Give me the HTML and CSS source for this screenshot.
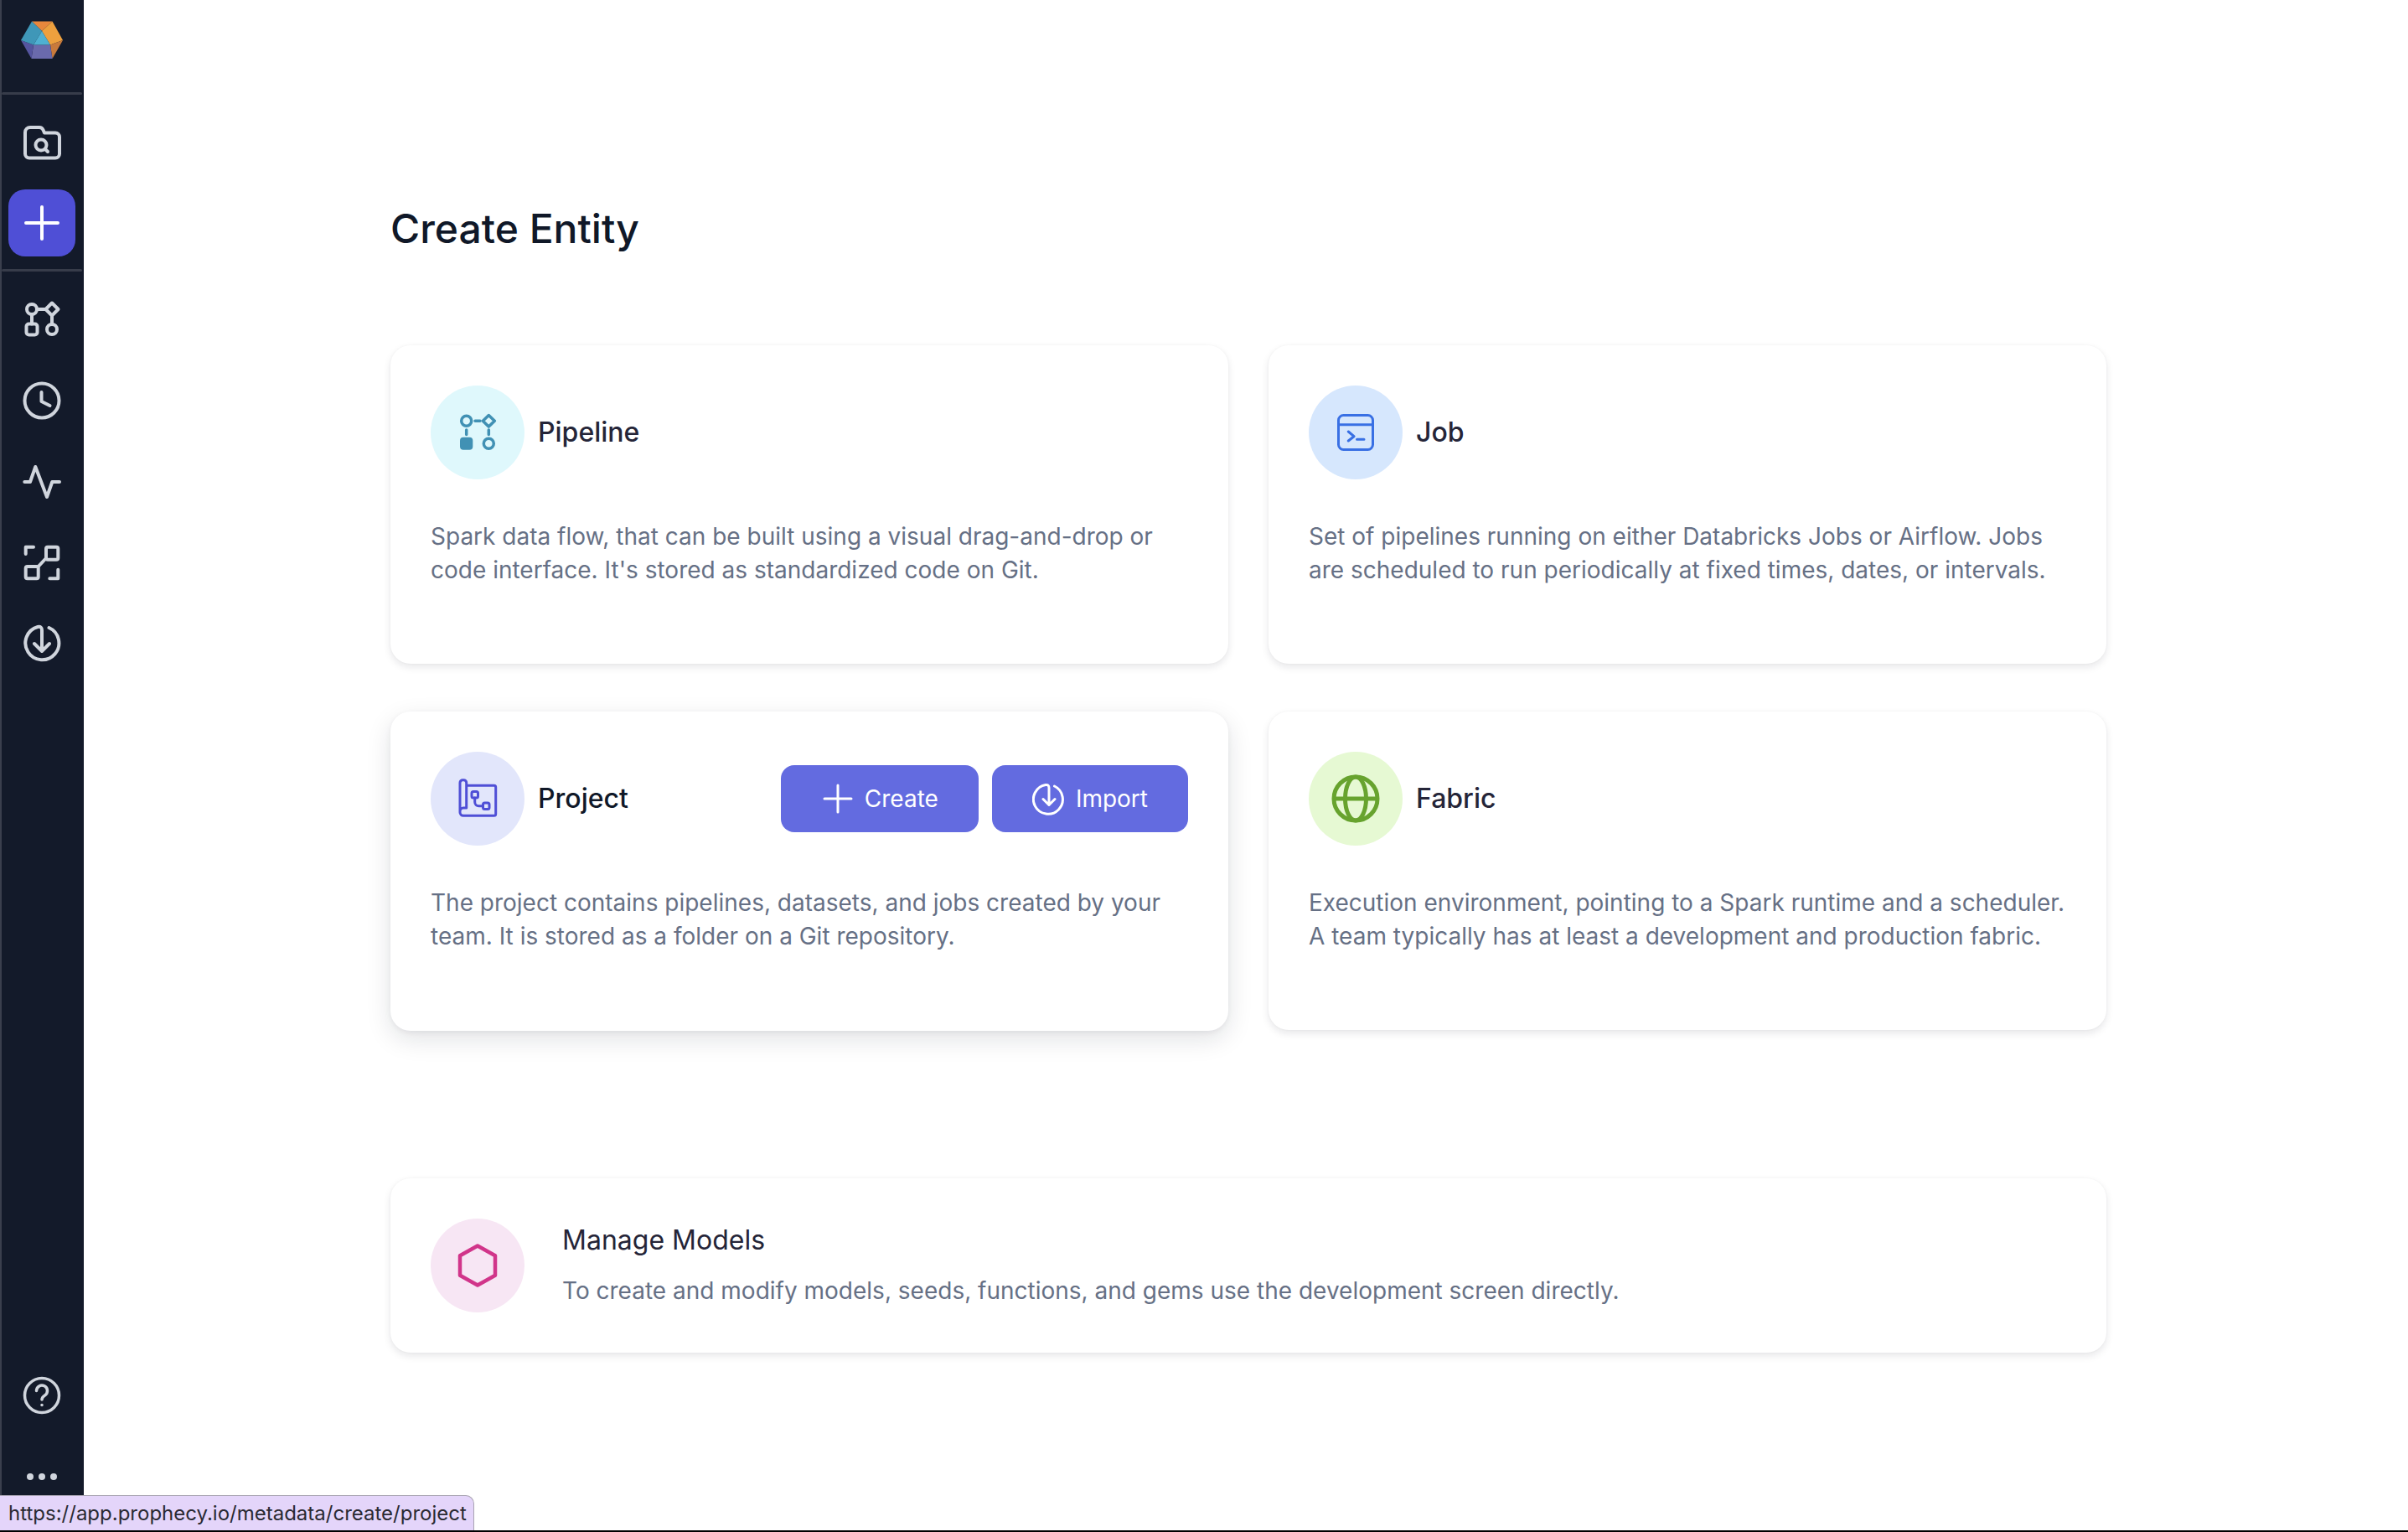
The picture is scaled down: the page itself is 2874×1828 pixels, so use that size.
FILE: index.html
```html
<!DOCTYPE html>
<html lang="en">
<head>
<meta charset="utf-8">
<title>Create Entity</title>
<link rel="stylesheet" href="styles.css">
</head>
<body>
<div class="app">
  <nav class="sidebar">
    <div class="logo">
      <svg viewBox="0 0 100 100" width="100" height="100">
        <polygon fill="#e8873c" points="38,25.5 62.5,25.5 50,37"/>
        <polygon fill="#eda03e" points="62.5,25.5 75,48 60,53.5 50,37"/>
        <polygon fill="#c87a3c" points="75,48 62.5,70 60,53.5"/>
        <polygon fill="#6a6aac" points="40,53.5 60,53.5 62.5,70 37.5,70"/>
        <polygon fill="#55559f" points="25,48 40,53.5 37.5,70"/>
        <polygon fill="#3f97b8" points="38,25.5 50,37 40,53.5 25,48"/>
        <polygon fill="#4fb0d2" points="50,37 60,53.5 40,53.5"/>
      </svg>
    </div>
    <div class="rule"></div>
    <a class="nav-item nav-item-first">
      <svg class="ico" viewBox="0 0 48 48"><path d="M4 12a6 6 0 0 1 6-6h11a5 5 0 0 1 4.500 3l1.500 3.500h13a5 5 0 0 1 5 5v20a5 5 0 0 1-5 5H9a5 5 0 0 1-5-5z"/><circle cx="23" cy="27" r="6.500"/><path d="M28 32l3 3"/></svg>
    </a>
    <a class="add-btn">
      <svg class="ico ico-white" viewBox="0 0 48 48"><path d="M24 5v38M5 24h38"/></svg>
    </a>
    <div class="rule rule-low"></div>
    <a class="nav-item">
      <svg class="ico" viewBox="0 0 48 48"><circle cx="12" cy="12" r="6"/><path d="M36 4.500l7.500 7.500-7.500 7.500-7.500-7.500z"/><rect x="5.500" y="29.500" width="13" height="13" rx="3"/><circle cx="36" cy="36" r="6"/><path d="M18 12h10.500M12 18v11.500M36 19.500V30"/></svg>
    </a>
    <a class="nav-item">
      <svg class="ico" viewBox="0 0 48 48"><circle cx="24" cy="24" r="20.500"/><path d="M23.500 14v11l10 5"/></svg>
    </a>
    <a class="nav-item">
      <svg class="ico" viewBox="0 0 48 48"><path d="M3.300 25H10l6.300-18L30 43l6.300-18H45"/></svg>
    </a>
    <a class="nav-item">
      <svg class="ico" viewBox="0 0 48 48"><path d="M4.700 14V5.700H14M33.300 43.300h10V32.700M19.700 29L29 19"/><rect x="29" y="5.700" width="14.300" height="15" rx="2"/><rect x="4.700" y="29" width="15" height="14.300" rx="2"/></svg>
    </a>
    <a class="nav-item">
      <svg class="ico" viewBox="0 0 48 48"><path d="M32.500 6A20 20 0 1 1 19 5q5-1 5 4v25M15 25l9 9 9-9"/></svg>
    </a>
    <div class="sidebar-foot">
      <a class="nav-item">
        <svg class="ico ico-thin" viewBox="0 0 48 48"><circle cx="24" cy="24" r="20.500"/><path d="M17.500 18.500a6.500 6.500 0 1 1 10 5.500c-2.500 1.500-3.500 2.500-3.500 5"/><path d="M24 35.500v.1"/></svg>
      </a>
      <div class="dots"><span class="dot"></span><span class="dot"></span><span class="dot"></span></div>
    </div>
  </nav>

  <main class="content">
    <h1 class="page-title">Create Entity</h1>
    <section class="entity-grid">
      <article class="card">
        <header class="card-head">
          <span class="badge badge-cyan">
            <svg class="badge-ico" viewBox="0 0 48 48" fill="none" stroke="#4191b4" stroke-width="3.500" stroke-linecap="round" stroke-linejoin="round"><circle cx="10.700" cy="10.300" r="6"/><path d="M37.300 3.500l7 6.800-7 6.800-7-6.800z"/><rect x="3" y="29.700" width="15.300" height="15" rx="4" fill="#4191b4" stroke="none"/><circle cx="37.300" cy="37.300" r="6"/><path d="M21 10.300h6M10.700 21v5.500M37.300 21v5.500"/></svg>
          </span>
          <h2 class="card-title">Pipeline</h2>
        </header>
        <p class="card-text">Spark data flow, that can be built using a visual drag-and-drop or code interface. It's stored as standardized code on Git.</p>
      </article>

      <article class="card">
        <header class="card-head">
          <span class="badge badge-blue">
            <svg class="badge-ico" viewBox="0 0 48 48" fill="none" stroke="#3970e4" stroke-width="3" stroke-linecap="round" stroke-linejoin="round"><rect x="3.500" y="3.500" width="41" height="41" rx="6"/><path d="M3.500 14.700h41M15.300 23l6.700 5.700-6.700 5.300M25.500 32.300h8.500"/></svg>
          </span>
          <h2 class="card-title">Job</h2>
        </header>
        <p class="card-text">Set of pipelines running on either Databricks Jobs or Airflow. Jobs are scheduled to run periodically at fixed times, dates, or intervals.</p>
      </article>

      <article class="card card-hover">
        <header class="card-head">
          <span class="badge badge-indigo">
            <svg class="badge-ico" viewBox="0 0 48 48" fill="none" stroke="#4f4fd6" stroke-width="3" stroke-linecap="round" stroke-linejoin="round"><path d="M10.700 8.300h33a2 2 0 0 1 2 2v32a2 2 0 0 1-2 2H7a4 4 0 0 1-4-4V5a3.300 3.300 0 0 1 3.300-3.300h1.100A3.300 3.300 0 0 1 10.700 5v30H7a4 4 0 0 0-4 4"/><rect x="17" y="15.500" width="7.500" height="7.500" rx="2"/><rect x="30.500" y="29" width="7.500" height="7.500" rx="2"/><path d="M20.700 23v5a4.700 4.700 0 0 0 4.700 4.700h5"/></svg>
          </span>
          <h2 class="card-title card-title-strong">Project</h2>
          <div class="card-actions">
            <button class="btn">
              <svg class="btn-ico" viewBox="0 0 40 40"><path d="M20 4v32M4 20h32"/></svg>
              <span>Create</span>
            </button>
            <button class="btn">
              <svg class="btn-ico" viewBox="0 0 40 40"><path d="M26.500 5A17.500 17.500 0 1 1 16 3.500q4-.5 4 3.500v20.500M13 20.500l7 7 7-7"/></svg>
              <span>Import</span>
            </button>
          </div>
        </header>
        <p class="card-text">The project contains pipelines, datasets, and jobs created by your team. It is stored as a folder on a Git repository.</p>
      </article>

      <article class="card">
        <header class="card-head">
          <span class="badge badge-green">
            <svg class="badge-ico-lg" viewBox="0 0 64 64" fill="none" stroke="#67a32e" stroke-width="5"><circle cx="32" cy="32" r="26"/><ellipse cx="32" cy="32" rx="12.500" ry="26"/><path d="M6 32h52"/></svg>
          </span>
          <h2 class="card-title">Fabric</h2>
        </header>
        <p class="card-text">Execution environment, pointing to a Spark runtime and a scheduler. A team typically has at least a development and production fabric.</p>
      </article>
    </section>

    <section class="card card-wide">
      <span class="badge badge-pink">
        <svg class="badge-ico-lg" viewBox="0 0 64 64" fill="none" stroke="#d1358a" stroke-width="4.500" stroke-linejoin="round"><path d="M32 8.500l21 11.700v23.600L32 55.500 11 43.800V20.200z"/></svg>
      </span>
      <div class="wide-copy">
        <h2 class="wide-title">Manage Models</h2>
        <p class="wide-text">To create and modify models, seeds, functions, and gems use the development screen directly.</p>
      </div>
    </section>
  </main>

  <div class="status-url">https://app.prophecy.io/metadata/create/project</div>
</div>
<div class="window-edge"></div>
</body>
</html>
```

FILE: styles.css
```css
* { box-sizing: border-box; }
html, body { height: 100%; }
body {
  margin: 0;
  display: flex;
  flex-direction: column;
  background: #fff;
  font-family: Inter, "Liberation Sans", sans-serif;
  font-optical-sizing: none;
  overflow: hidden;
}
.app { position: relative; flex: 1; display: flex; min-height: 0; }
.window-edge { height: 2px; background: #000; }

.sidebar {
  width: 100px;
  flex: none;
  display: flex;
  flex-direction: column;
  background: #131a2a;
  border-left: 2px solid #3a3f4d;
  padding-right: 2px;
}
.logo { height: 110px; margin-left: -2px; }
.logo svg { display: block; }
.rule { height: 3px; background: #373c4a; border-radius: 2px; }
.rule-low { margin-top: 15px; margin-bottom: 9px; }
.nav-item {
  height: 96.500px;
  display: flex;
  align-items: center;
  justify-content: center;
}
.nav-item-first { height: 96px; margin-top: 9px; margin-bottom: 8px; }
.ico {
  display: block;
  width: 48px;
  height: 48px;
  fill: none;
  stroke: #d0d5dd;
  stroke-width: 4;
  stroke-linecap: round;
  stroke-linejoin: round;
}
.ico-white { stroke: #fff; }
.ico-thin { stroke-width: 3.500; }
.add-btn {
  width: 80px;
  height: 80px;
  margin-left: 8px;
  background: #4f4fd6;
  border-radius: 20px;
  display: flex;
  align-items: center;
  justify-content: center;
}
.sidebar-foot { margin-top: auto; padding-bottom: 60px; display: flex; flex-direction: column; }
.dots { display: flex; justify-content: center; gap: 6px; margin-top: 44.500px; }
.dot { width: 8px; height: 8px; border-radius: 50%; background: #d0d5dd; }

.content { flex: 1; padding: 245px 0 0 366px; }
.page-title {
  margin: 0 0 111px;
  font-size: 48px;
  line-height: 56px;
  font-weight: 500;
  color: #101828;
}
.entity-grid {
  width: 2048px;
  display: grid;
  grid-template-columns: 1000px 1000px;
  column-gap: 48px;
  row-gap: 57px;
}
.card {
  height: 380px;
  padding: 48px;
  border-radius: 24px;
  background: #fff;
  box-shadow: 0 4px 10px rgba(16, 24, 40, .1), 0 0 3px rgba(16, 24, 40, .04);
}
.card-hover { height: 381px; box-shadow: 0 10px 30px rgba(16, 24, 40, .12), 0 2px 6px rgba(16, 24, 40, .06); }
.card-head { display: flex; align-items: center; height: 112px; }
.badge {
  width: 112px;
  height: 112px;
  flex: none;
  border-radius: 50%;
  display: flex;
  align-items: center;
  justify-content: center;
}
.badge-cyan { background: #dff8fc; }
.badge-blue { background: #d6e7fd; }
.badge-indigo { background: #e2e6fb; }
.badge-green { background: #e6f9d3; }
.badge-pink { background: #f7e6f4; }
.badge-ico { width: 48px; height: 48px; display: block; }
.badge-ico-lg { width: 64px; height: 64px; display: block; }
.card-title {
  margin: 0 0 0 16px;
  font-size: 32px;
  line-height: 40px;
  font-weight: 500;
  color: #252538;
}
.card-title-strong { color: #101828; }
.card-actions { margin-left: auto; display: flex; gap: 16px; }
.btn {
  height: 80px;
  padding: 0 48px;
  display: flex;
  align-items: center;
  gap: 12px;
  border: 0;
  border-radius: 16px;
  background: #636be0;
  color: #fff;
  font: 400 28px Inter, "Liberation Sans", sans-serif;
}
.btn-ico {
  width: 40px;
  height: 40px;
  display: block;
  fill: none;
  stroke: #fff;
  stroke-width: 3;
  stroke-linecap: round;
  stroke-linejoin: round;
}
.card-text {
  margin: 48px 0 0;
  font-size: 28px;
  line-height: 40px;
  color: #667085;
}
.card-wide {
  width: 2048px;
  height: 208px;
  margin-top: 176px;
  display: flex;
  align-items: center;
}
.wide-copy { margin-left: 45px; }
.wide-title {
  margin: 0 0 20px;
  font-size: 32px;
  line-height: 40px;
  font-weight: 400;
  color: #252538;
}
.wide-text { margin: 0; font-size: 28px; line-height: 40px; color: #667085; }

.status-url {
  position: absolute;
  left: 0;
  bottom: 0;
  width: 566px;
  height: 42px;
  padding-left: 10px;
  background: #e4d5fa;
  border: 1px solid #a9a4b2;
  border-width: 1px 1px 0 0;
  border-top-right-radius: 10px;
  color: #2a2a33;
  font-size: 24px;
  line-height: 41px;
  white-space: nowrap;
}
```
